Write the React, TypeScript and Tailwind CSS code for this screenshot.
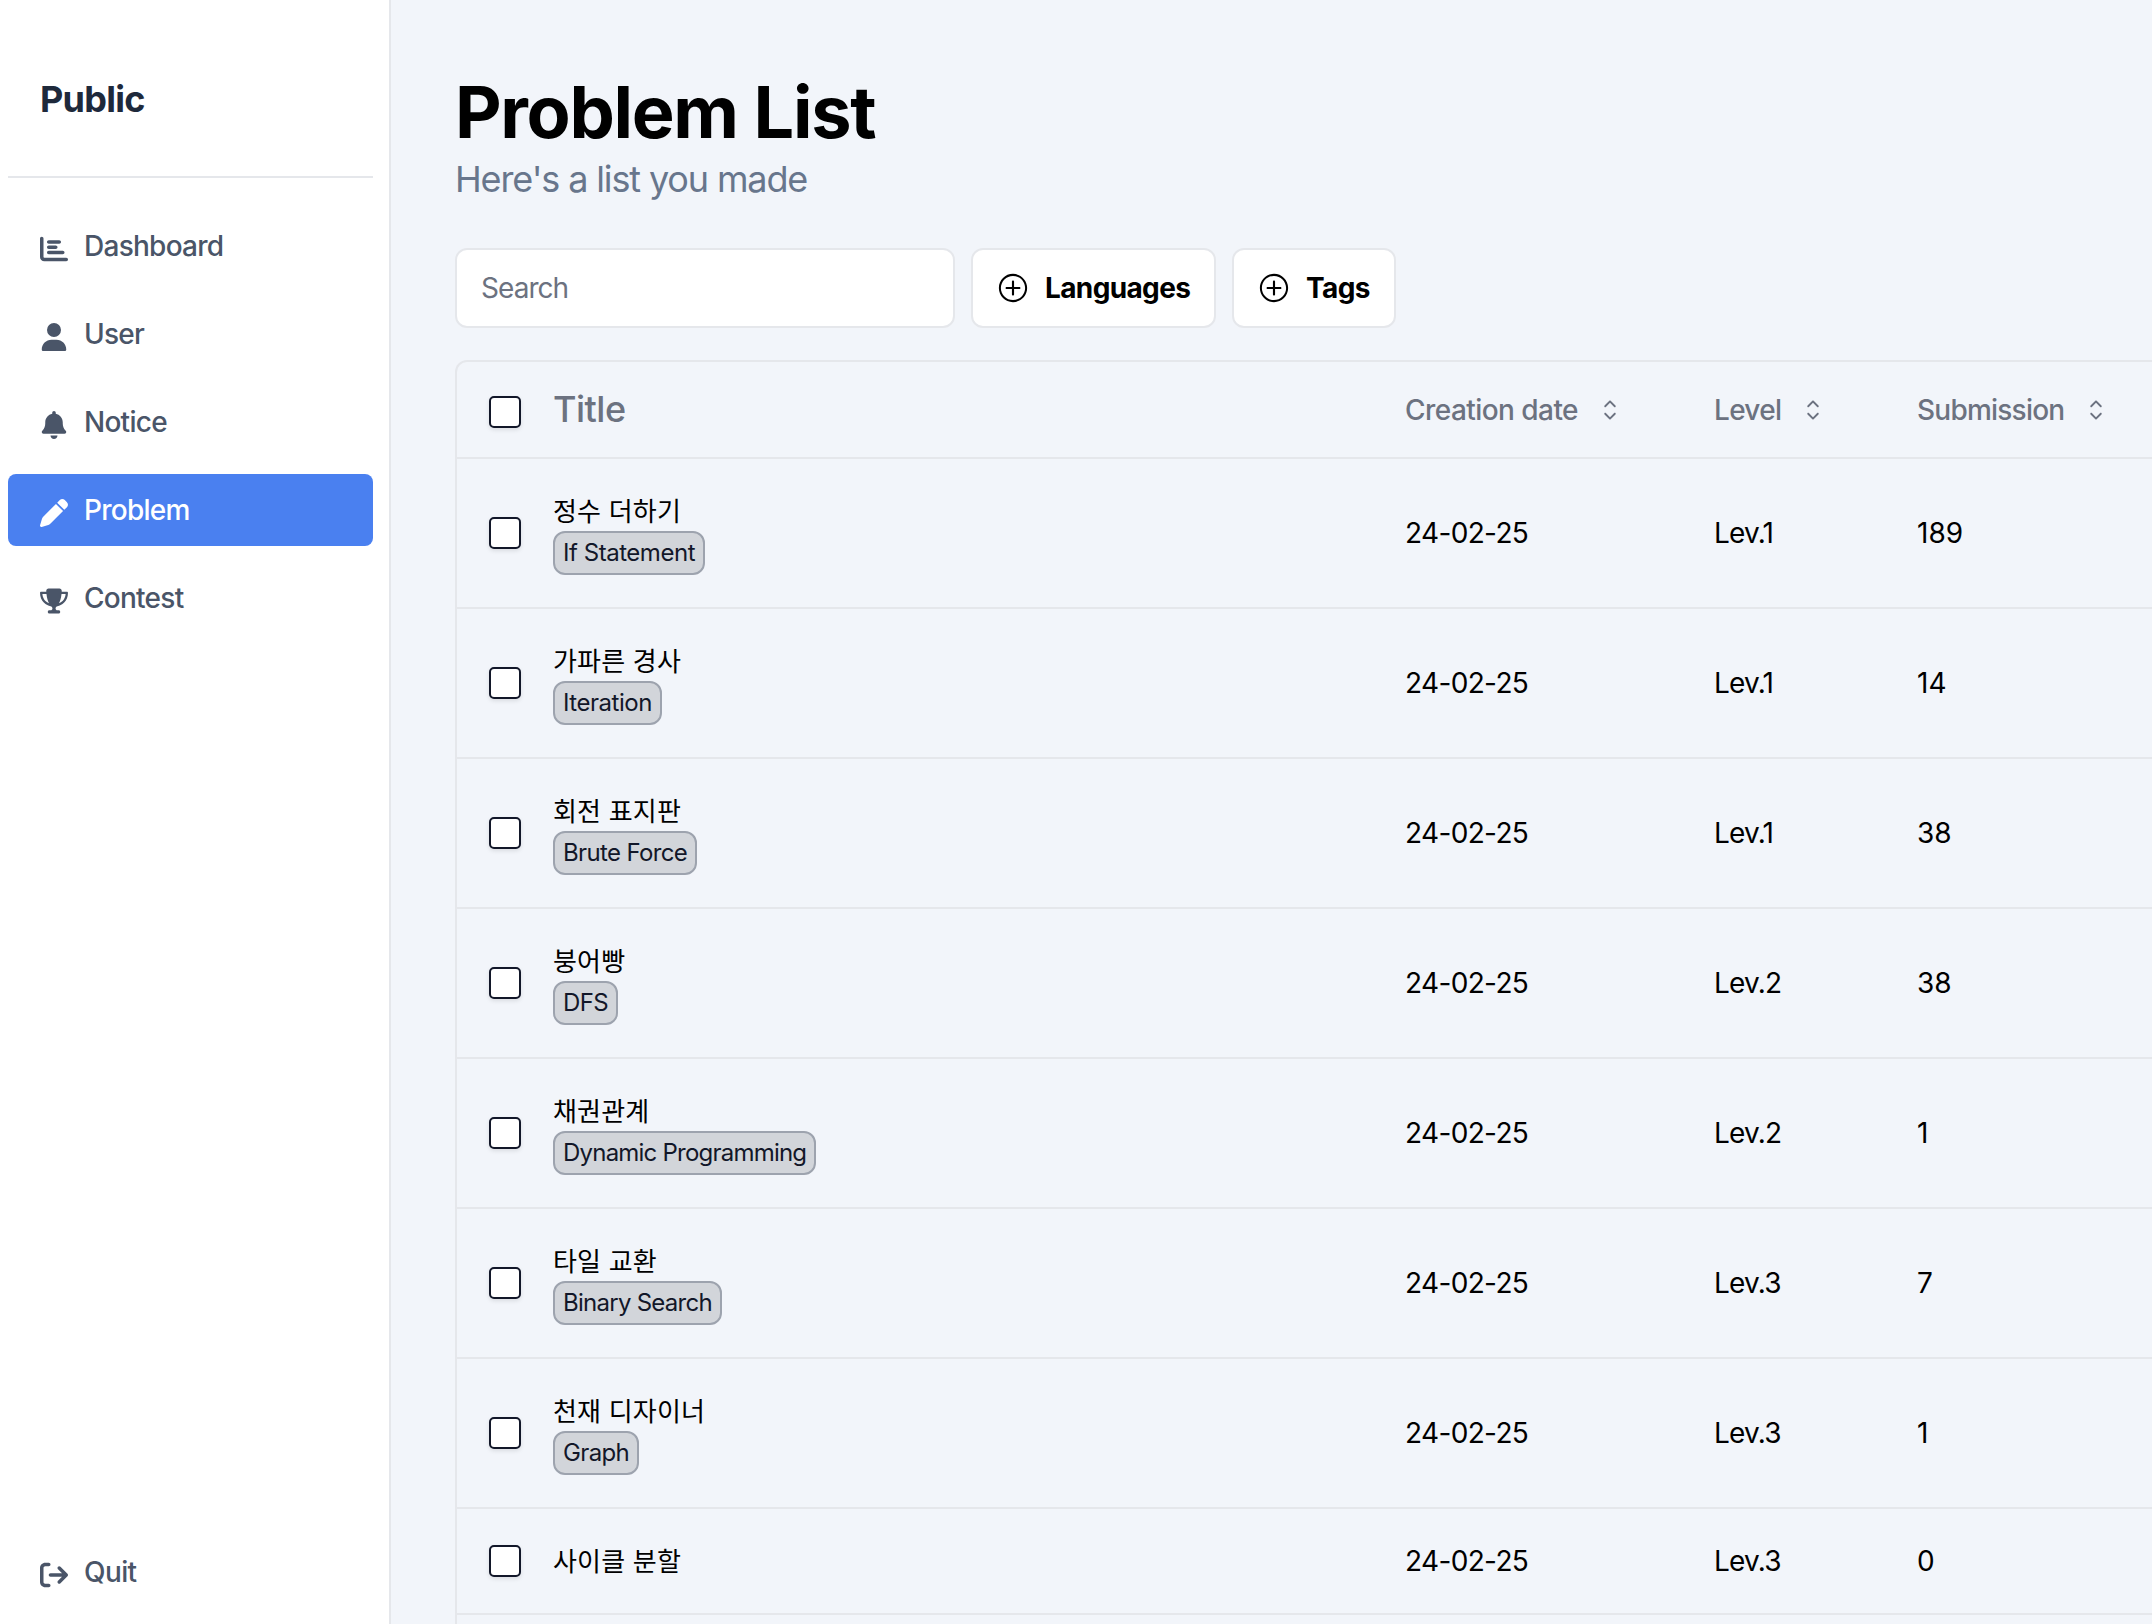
import type { ReactNode } from "react";
import {
  FaChartBar,
  FaUser,
  FaBell,
  FaPen,
  FaTrophy,
  FaArrowRightFromBracket,
} from "react-icons/fa6";
import { RxCaretSort, RxPlusCircled } from "react-icons/rx";

const nav = [
  { label: "Dashboard", icon: FaChartBar },
  { label: "User", icon: FaUser },
  { label: "Notice", icon: FaBell },
  { label: "Problem", icon: FaPen, active: true },
  { label: "Contest", icon: FaTrophy },
];

type Problem = {
  title: string;
  tag?: string;
  tracking?: string;
  level: number;
  submissions: number;
};

const problems: Problem[] = [
  { title: "정수 더하기", tag: "If Statement", tracking: "tracking-[-0.46px]", level: 1, submissions: 189 },
  { title: "가파른 경사", tag: "Iteration", tracking: "tracking-[-0.46px]", level: 1, submissions: 14 },
  { title: "회전 표지판", tag: "Brute Force", tracking: "tracking-[-0.65px]", level: 1, submissions: 38 },
  { title: "붕어빵", tag: "DFS", tracking: "tracking-[-0.65px]", level: 2, submissions: 38 },
  { title: "채권관계", tag: "Dynamic Programming", tracking: "tracking-[-0.78px]", level: 2, submissions: 1 },
  { title: "타일 교환", tag: "Binary Search", tracking: "tracking-[-0.74px]", level: 3, submissions: 7 },
  { title: "천재 디자이너", tag: "Graph", tracking: "tracking-[-0.65px]", level: 3, submissions: 1 },
  { title: "사이클 분할", level: 3, submissions: 0 },
];

function Checkbox() {
  return (
    <span
      role="checkbox"
      aria-checked="false"
      className="block size-8 shrink-0 rounded-[5px] border-2 border-[#121729] bg-white shadow-[0_2px_4px_rgba(0,0,0,0.1)]"
    />
  );
}

function FilterButton({ label, className }: { label: string; className: string }) {
  return (
    <button
      className={
        "flex h-20 items-center gap-4 rounded-xl border-2 border-[#e5e7eb] bg-white px-6 font-bold tracking-[-0.63px] text-black " +
        className
      }
    >
      <RxPlusCircled className="size-8 shrink-0" />
      <span>{label}</span>
    </button>
  );
}

function SortHeader({ children, className }: { children: ReactNode; className: string }) {
  return (
    <div className={"flex shrink-0 items-center gap-4 font-medium " + className}>
      <span>{children}</span>
      <RxCaretSort className="size-8 shrink-0" />
    </div>
  );
}

export default function App() {
  return (
    <div className="flex h-[1624px] w-[2152px] overflow-hidden bg-[#f2f5fa] font-['Inter','Noto_Sans_CJK_KR',sans-serif] text-[28px] leading-10 text-black">
      <aside className="flex w-[391px] shrink-0 flex-col border-r-2 border-[#e5e7eb] bg-white pl-2 pr-4 text-[#4a5568]">
        <div className="flex h-[178px] items-center border-b-2 border-[#e5e7eb] pt-[22px] pl-8 text-4xl font-bold tracking-[-0.75px] text-[#1e293b]">
          Public
        </div>
        <nav className="mt-8 flex flex-col gap-4 font-medium tracking-[-0.74px]">
          {nav.map(({ label, icon: Icon, active }) => (
            <a
              key={label}
              className={
                active
                  ? "flex h-[72px] items-center gap-4 rounded-lg bg-[#4a80f0] px-8 text-white"
                  : "flex h-[72px] items-center gap-4 rounded-lg px-8"
              }
            >
              <Icon className="mt-1.5 size-7" />
              <span>{label}</span>
            </a>
          ))}
        </nav>
        <a className="mt-auto mb-4 flex h-[72px] items-center gap-4 px-8 font-medium tracking-[-0.6px]">
          <FaArrowRightFromBracket className="mt-1.5 size-7" />
          <span>Quit</span>
        </a>
      </aside>

      <main className="flex min-w-0 grow flex-col pl-16 pt-[72px]">
        <h1 className="text-7xl leading-20 font-bold tracking-[-1.3px]">Problem List</h1>
        <p className="pb-0.5 text-4xl leading-[54px] tracking-[-1.13px] text-[#68768c]">
          Here's a list you made
        </p>

        <div className="mt-10 flex gap-4">
          <div className="flex h-20 w-[500px] items-center rounded-xl border-2 border-[#e5e7eb] bg-white px-6 tracking-[-0.95px] text-[#6c7280]">
            Search
          </div>
          <FilterButton label="Languages" className="w-[245px]" />
          <FilterButton label="Tags" className="w-[164px]" />
        </div>

        <div className="mt-8 w-[2000px] grow rounded-tl-xl border-2 border-b-0 border-[#e5e7eb]">
          <div className="flex h-[97px] items-center border-b-2 border-[#e5e7eb] pl-8 text-[#6c7280]">
            <div className="w-16 shrink-0 pt-1">
              <Checkbox />
            </div>
            <div className="w-[852px] shrink-0 pb-0.5 text-4xl font-medium tracking-[-0.5px]">
              Title
            </div>
            <SortHeader className="w-[309px] tracking-[-0.55px]">Creation date</SortHeader>
            <SortHeader className="w-[203px] tracking-[-0.7px]">Level</SortHeader>
            <SortHeader className="w-[250px] tracking-[-0.77px]">Submission</SortHeader>
          </div>
          {problems.map((p) => (
            <div key={p.title} className="flex items-center border-b-2 border-[#e5e7eb] py-8 pl-8">
              <div className="w-16 shrink-0">
                <Checkbox />
              </div>
              <div className="flex w-[852px] shrink-0 flex-col items-start">
                <div className="h-10 pt-px text-[26px] tracking-[0.2px]">{p.title}</div>
                {p.tag && (
                  <div
                    className={
                      "flex h-11 items-center rounded-xl border-2 border-[#9da3ae] bg-[#d2d5da] px-2 text-2xl text-[#121729] " +
                      p.tracking
                    }
                  >
                    {p.tag}
                  </div>
                )}
              </div>
              <div className="w-[309px] shrink-0 tracking-[-0.65px]">24-02-25</div>
              <div className="w-[203px] shrink-0 tracking-[-0.8px]">Lev.{p.level}</div>
              <div className="w-[250px] shrink-0">{p.submissions}</div>
            </div>
          ))}
        </div>
      </main>
    </div>
  );
}
